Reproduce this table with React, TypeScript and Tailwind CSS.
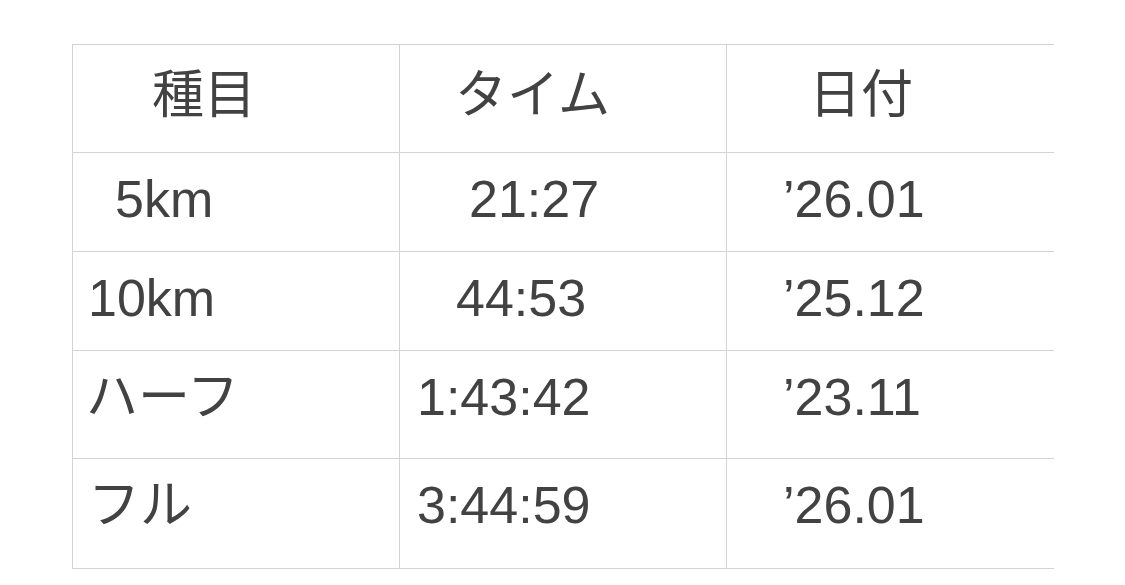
import React from 'react';

// Personal best table (種目 / タイム / 日付)
const rows = [
  { h: 'h-[99px]', cells: [
    { text: '5km', pad: 'pl-[42px]' },
    { text: '21:27', pad: 'pl-[69px]' },
    { text: '’26.01', pad: 'pl-[56px]' },
  ] },
  { h: 'h-[99px]', cells: [
    { text: '10km', pad: 'pl-[15px]' },
    { text: '44:53', pad: 'pl-[56px]' },
    { text: '’25.12', pad: 'pl-[56px]' },
  ] },
  { h: 'h-[108px]', cells: [
    { text: 'ハーフ', pad: 'pl-[13px]' },
    { text: '1:43:42', pad: 'pl-[17px]' },
    { text: '’23.11', pad: 'pl-[56px]' },
  ] },
  { h: 'h-[110px]', cells: [
    { text: 'フル', pad: 'pl-[15px]' },
    { text: '3:44:59', pad: 'pl-[17px]' },
    { text: '’26.01', pad: 'pl-[56px]' },
  ] },
];

const header = [
  { text: '種目', pad: 'pl-[79px]' },
  { text: 'タイム', pad: 'pl-[55px]' },
  { text: '日付', pad: 'pl-[82px]' },
];

export default function App() {
  return (
    <div className="w-[1125px] h-[585px] bg-white overflow-hidden font-['Liberation_Sans','Noto_Sans_CJK_JP',sans-serif] text-[#424242]">
      <div className="mt-[44px] ml-[72px] w-[982px] grid grid-cols-[327px_327px_327px] border-t border-l border-[#d3d3d3]">
        {header.map((c, i) => (
          <div
            key={c.text}
            className={`h-[108px] pt-[24px] ${c.pad} border-b border-[#d3d3d3] ${i < 2 ? 'border-r' : ''} text-[52px] leading-none whitespace-nowrap`}
          >
            {c.text}
          </div>
        ))}
        {rows.map((r, ri) =>
          r.cells.map((c, i) => (
            <div
              key={`${ri}-${i}`}
              className={`${r.h} pt-[20px] ${c.pad} border-b border-[#d3d3d3] ${i < 2 ? 'border-r' : ''} text-[52px] leading-none whitespace-nowrap`}
            >
              {c.text}
            </div>
          ))
        )}
      </div>
    </div>
  );
}
